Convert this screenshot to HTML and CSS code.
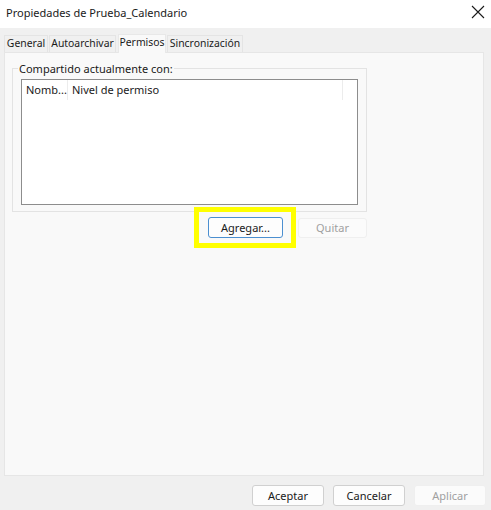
FILE: index.html
```html
<!DOCTYPE html>
<html lang="es">
<head>
    <meta charset="UTF-8">
    <meta name="viewport" content="width=device-width, initial-scale=1.0">
    <title>Propiedades de Prueba_Calendario</title>
    <link rel="stylesheet" href="styles.css">
</head>
<body>
    <div class="titlebar">
        <span class="title">Propiedades de Prueba_Calendario</span>
        <svg class="close" width="14" height="14" viewBox="0 0 14 14">
            <path d="M1 1 L13 13 M13 1 L1 13" stroke="#1a1a1a" stroke-width="1.1" fill="none"/>
        </svg>
    </div>

    <div class="tabs">
        <div class="tab tab-general">General</div>
        <div class="tab tab-archive">Autoarchivar</div>
        <div class="tab tab-perms active">Permisos</div>
        <div class="tab tab-sync">Sincronización</div>
    </div>

    <div class="panel">
        <fieldset class="group">
            <legend>Compartido actualmente con:</legend>
            <div class="listview">
                <div class="list-header">
                    <div class="col col-name">Nomb...</div>
                    <div class="col col-level">Nivel de permiso</div>
                    <div class="col col-rest"></div>
                </div>
            </div>
        </fieldset>
        <div class="group-actions">
            <div class="highlight-wrap">
                <button class="btn btn-focus">Agregar...</button>
                <span class="highlight"></span>
            </div>
            <button class="btn btn-small" disabled>Quitar</button>
        </div>
    </div>

    <div class="footer">
        <button class="btn btn-dialog">Aceptar</button>
        <button class="btn btn-dialog">Cancelar</button>
        <button class="btn btn-dialog" disabled>Aplicar</button>
    </div>
</body>
</html>
```

FILE: styles.css
```css
body {
    margin: 0;
    width: 491px;
    height: 510px;
    overflow: hidden;
    background-color: #f0f0f0;
    font-family: "Segoe UI", "Noto Sans", "Open Sans", sans-serif;
    font-size: 11px;
    color: #1a1a1a;
}
.titlebar {
    height: 28px;
    background-color: #fff;
    display: flex;
    align-items: center;
    justify-content: space-between;
    padding: 0 6px 4px 6px;
    box-sizing: border-box;
}
.title {
    font-size: 11px;
}
.tabs {
    display: flex;
    align-items: flex-end;
    height: 24px;
    padding-left: 4px;
}
.tab {
    height: 16px;
    line-height: 15px;
    font-size: 10.4px;
    text-align: center;
    white-space: nowrap;
    margin-right: 1px;
    border: 1px solid #e4e4e4;
    border-bottom: none;
    background-color: #f0f0f0;
    box-sizing: content-box;
}
.tab-general {
    width: 42px;
}
.tab-archive {
    width: 65px;
}
.tab-perms {
    width: 46px;
}
.tab-sync {
    width: 74px;
}
.tab.active {
    height: 18px;
    margin: 0 1px -1px 1px;
    background-color: #f9f9f9;
    border-color: #e8e8e8;
    position: relative;
    z-index: 1;
}
.panel {
    width: 480px;
    height: 424px;
    margin-left: 4px;
    box-sizing: border-box;
    background-color: #f9f9f9;
    border: 1px solid #e6e6e6;
    padding: 8px 0 0 7px;
}
.group {
    width: 355px;
    box-sizing: border-box;
    margin: 0;
    padding: 0 8px 6px 8px;
    border: 1px solid #e3e3e3;
}
.group legend {
    padding: 0 1px;
    margin-left: -3px;
}
.listview {
    height: 126px;
    margin-top: 3px;
    background-color: #fff;
    border: 1px solid #8d8d8d;
    box-sizing: border-box;
}
.list-header {
    display: flex;
    height: 20px;
}
.col {
    line-height: 19px;
    padding-left: 4px;
    border-right: 1px solid #ececec;
    box-sizing: border-box;
}
.col-name {
    width: 46px;
}
.col-level {
    width: 275px;
}
.col-rest {
    flex: 1;
    border-right: none;
}
.group-actions {
    width: 355px;
    display: flex;
    justify-content: flex-end;
    align-items: center;
    gap: 15px;
    margin-top: 5px;
}
.highlight-wrap {
    position: relative;
    height: 21px;
}
.highlight {
    position: absolute;
    left: -14px;
    top: -10px;
    width: 102px;
    height: 41px;
    box-sizing: border-box;
    border: 5px solid #ffff00;
}
.btn {
    font-family: inherit;
    font-size: 11px;
    color: #1a1a1a;
    background-color: #fdfdfd;
    border: 1px solid #d0d0d0;
    border-radius: 3px;
    padding: 0;
    height: 21px;
    box-sizing: border-box;
}
.btn-focus {
    width: 75px;
    border-color: #4b8fd0;
}
.btn-small {
    width: 69px;
    height: 20px;
}
.btn:disabled {
    color: #a0a0a0;
    background-color: #fbfbfb;
    border-color: #efefef;
}
.footer {
    display: flex;
    justify-content: flex-end;
    gap: 9px;
    padding: 9px 5px 0 0;
}
.btn-dialog {
    width: 72px;
}
```
